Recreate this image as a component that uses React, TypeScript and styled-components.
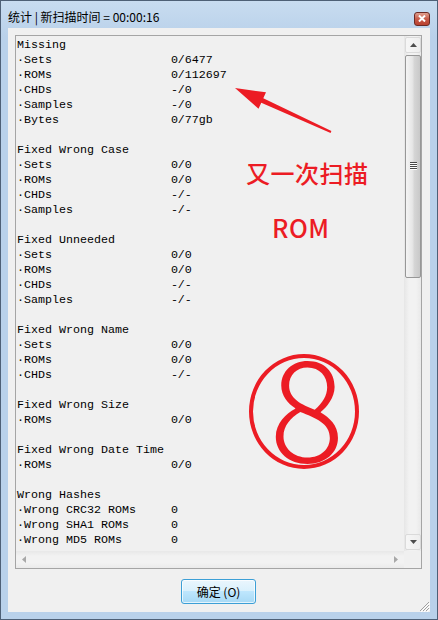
import React from "react";
import styled, { createGlobalStyle } from "styled-components";

const GlobalStyle = createGlobalStyle`
  html, body {
    margin: 0;
    padding: 0;
    background: #ffffff;
  }
`;

type Section = { title: string; rows: [string, string][] };

const sections: Section[] = [
  {
    title: "Missing",
    rows: [
      ["Sets", "0/6477"],
      ["ROMs", "0/112697"],
      ["CHDs", "-/0"],
      ["Samples", "-/0"],
      ["Bytes", "0/77gb"],
    ],
  },
  {
    title: "Fixed Wrong Case",
    rows: [
      ["Sets", "0/0"],
      ["ROMs", "0/0"],
      ["CHDs", "-/-"],
      ["Samples", "-/-"],
    ],
  },
  {
    title: "Fixed Unneeded",
    rows: [
      ["Sets", "0/0"],
      ["ROMs", "0/0"],
      ["CHDs", "-/-"],
      ["Samples", "-/-"],
    ],
  },
  {
    title: "Fixed Wrong Name",
    rows: [
      ["Sets", "0/0"],
      ["ROMs", "0/0"],
      ["CHDs", "-/-"],
    ],
  },
  { title: "Fixed Wrong Size", rows: [["ROMs", "0/0"]] },
  { title: "Fixed Wrong Date Time", rows: [["ROMs", "0/0"]] },
  {
    title: "Wrong Hashes",
    rows: [
      ["Wrong CRC32 ROMs", "0"],
      ["Wrong SHA1 ROMs", "0"],
      ["Wrong MD5 ROMs", "0"],
    ],
  },
];

const Window = styled.div`
  position: relative;
  width: 438px;
  height: 620px;
  box-sizing: border-box;
  border: 1px solid #4e6076;
  background: linear-gradient(#c8dcf0, #b9d1ea 36px);
  display: flex;
  flex-direction: column;
  overflow: hidden;
`;

const TitleBar = styled.div`
  height: 27px;
  display: flex;
  align-items: center;
  justify-content: space-between;
  padding: 0 7px 0 7px;
`;

const Title = styled.div`
  font-family: "Noto Sans CJK SC", "Noto Sans", sans-serif;
  font-size: 12px;
  color: #000;
  margin-top: 3px;
`;

const CloseBox = styled.div`
  width: 16px;
  height: 14px;
  margin-top: 8px;
  box-sizing: border-box;
  border: 1px solid #6b2a24;
  border-radius: 3px;
  background: linear-gradient(#e0a08f, #c75a48 50%, #b8412f);
  display: flex;
  align-items: center;
  justify-content: center;
`;

const Client = styled.div`
  position: relative;
  flex: 1;
  margin: 0 7px 7px 7px;
  background: #f0f0f0;
  padding: 7px 8px 0 7px;
  display: flex;
  flex-direction: column;
`;

const TextBox = styled.div`
  height: 534px;
  box-sizing: border-box;
  border: 1px solid #a5a5a5;
  background: #f0f0f0;
  display: grid;
  grid-template-columns: 1fr 17px;
  grid-template-rows: 1fr 17px;
`;

const Content = styled.div`
  overflow: hidden;
  padding: 2px 0 0 1px;
  font-family: "Courier New", "Liberation Mono", monospace;
  font-size: 11.67px;
  line-height: 15px;
  color: #000;
  white-space: pre;
`;

const Line = styled.div`
  height: 15px;
  display: flex;
`;

const Label = styled.span`
  width: 22ch;
  flex: none;
`;

const Dot = styled.span`
  display: inline-block;
  width: 1ch;
  text-align: center;
`;

const VScroll = styled.div`
  display: flex;
  flex-direction: column;
  padding: 1px 0 1px 1px;
  gap: 2px;
  background: linear-gradient(to right, #e6e6e6, #f2f2f2 30%, #f2f2f2 70%, #e9e9e9);
`;

const HScroll = styled.div`
  display: flex;
  align-items: center;
  justify-content: space-between;
  padding: 0 6px;
  background: linear-gradient(#e8e8e8, #f2f2f2 30%, #f2f2f2 70%, #eaeaea);
`;

const Corner = styled.div`
  background: #f0f0f0;
`;

const ArrowButton = styled.div<{ $grow?: boolean }>`
  height: 16px;
  box-sizing: border-box;
  border: 1px solid #dadada;
  border-radius: 2px;
  background: linear-gradient(to right, #f6f6f6, #eeeeee);
  display: flex;
  align-items: center;
  justify-content: center;
  margin-top: ${(p) => (p.$grow ? "auto" : "0")};
`;

const Thumb = styled.div`
  height: 223px;
  box-sizing: border-box;
  border: 1px solid #979797;
  border-radius: 2px;
  background: linear-gradient(to right, #f4f4f4, #e6e6e6 45%, #d5d5d5 60%, #c8c8c8);
  display: flex;
  flex-direction: column;
  align-items: center;
  padding-top: 106px;
  gap: 1px;
`;

const GripLine = styled.div`
  width: 7px;
  height: 1px;
  background: #4a4a4a;
  box-shadow: 0 1px 0 #ffffff;
`;

const ButtonRow = styled.div`
  flex: 1;
  display: flex;
  align-items: center;
  justify-content: center;
`;

const OkButton = styled.button`
  width: 75px;
  height: 25px;
  box-sizing: border-box;
  border: 1px solid #3c9fd6;
  border-radius: 3px;
  background: linear-gradient(#eaf6fd, #d9f0fc 50%, #bee6fd 50%, #a7d9f5);
  box-shadow: inset 0 0 0 1px rgba(255, 255, 255, 0.7);
  font-family: "Noto Sans CJK SC", "Noto Sans", sans-serif;
  font-size: 12px;
  color: #000;
  padding: 0;
  margin-top: 1px;
`;

const Grip = styled.svg`
  position: absolute;
  right: 0;
  bottom: 0;
`;

const Overlay = styled.div`
  position: absolute;
  inset: 0;
  pointer-events: none;
`;

const RedText = styled.div<{ $size: number; $x: number; $y: number }>`
  position: absolute;
  left: ${(p) => p.$x}px;
  top: ${(p) => p.$y}px;
  font-family: "Noto Sans CJK SC", "Noto Sans", sans-serif;
  font-size: ${(p) => p.$size}px;
  line-height: 1;
  font-weight: 500;
  color: #ec1c24;
  letter-spacing: 0.5px;
  white-space: nowrap;
`;

const CircleMark = styled.div`
  position: absolute;
  left: 248px;
  top: 353px;
  width: 110px;
  height: 115px;
  box-sizing: border-box;
  border: 4px solid #ec1c24;
  border-radius: 50%;
  display: flex;
  align-items: center;
  justify-content: center;
  font-family: "Noto Sans CJK SC", "Noto Sans", sans-serif;
  font-size: 140px;
  font-weight: 300;
  line-height: 1;
  color: #ec1c24;
`;

const Eight = styled.span`
  display: block;
  margin: 0 0 22px 6px;
`;

const Triangle = ({ dir, color }: { dir: "up" | "down" | "left" | "right"; color: string }) => {
  const pts = {
    up: "0,4 7,4 3.5,0",
    down: "0,0 7,0 3.5,4",
    left: "4,0 4,7 0,3.5",
    right: "0,0 0,7 4,3.5",
  }[dir];
  const vertical = dir === "up" || dir === "down";
  return (
    <svg width={vertical ? 7 : 4} height={vertical ? 4 : 7}>
      <polygon points={pts} fill={color} />
    </svg>
  );
};

export default function App() {
  return (
    <>
      <GlobalStyle />
      <Window>
        <TitleBar>
          <Title>统计 | 新扫描时间 = 00:00:16</Title>
          <CloseBox>
            <svg width="8" height="7" viewBox="0 0 8 7">
              <path d="M1 0.5 L7 6.5 M7 0.5 L1 6.5" stroke="#fff" strokeWidth="2" />
            </svg>
          </CloseBox>
        </TitleBar>
        <Client>
          <TextBox>
            <Content>
              {sections.map((section, i) => (
                <React.Fragment key={section.title}>
                  {i > 0 && <Line />}
                  <Line>{section.title}</Line>
                  {section.rows.map(([label, value]) => (
                    <Line key={label}>
                      <Label>
                        <Dot>·</Dot>
                        {label}
                      </Label>
                      <span>{value}</span>
                    </Line>
                  ))}
                </React.Fragment>
              ))}
            </Content>
            <VScroll>
              <ArrowButton>
                <Triangle dir="up" color="#4d4d4d" />
              </ArrowButton>
              <Thumb>
                <GripLine />
                <GripLine />
                <GripLine />
                <GripLine />
              </Thumb>
              <ArrowButton $grow>
                <Triangle dir="down" color="#4d4d4d" />
              </ArrowButton>
            </VScroll>
            <HScroll>
              <Triangle dir="left" color="#a8a8a8" />
              <Triangle dir="right" color="#a8a8a8" />
            </HScroll>
            <Corner />
          </TextBox>
          <ButtonRow>
            <OkButton>确定 (O)</OkButton>
          </ButtonRow>
          <Grip width="12" height="12" viewBox="0 0 12 12">
            <path d="M11 2 L2 11 M11 5 L5 11 M11 8 L8 11" stroke="#a0a0a0" strokeWidth="1" />
            <path d="M12 3 L3 12 M12 6 L6 12 M12 9 L9 12" stroke="#ffffff" strokeWidth="1" />
          </Grip>
        </Client>
        <Overlay>
          <svg width="438" height="620" style={{ position: "absolute", left: 0, top: 0 }}>
            <polygon
              points="234,87 265,91.3 262.3,97.2 330.4,130.1 329.6,131.9 260.3,101.8 257.5,107.7"
              fill="#ec1c24"
            />
          </svg>
          <RedText $size={24} $x={245} $y={160}>
            又一次扫描
          </RedText>
          <RedText $size={25} $x={271} $y={214}>
            ROM
          </RedText>
          <CircleMark>
            <Eight>8</Eight>
          </CircleMark>
        </Overlay>
      </Window>
    </>
  );
}
